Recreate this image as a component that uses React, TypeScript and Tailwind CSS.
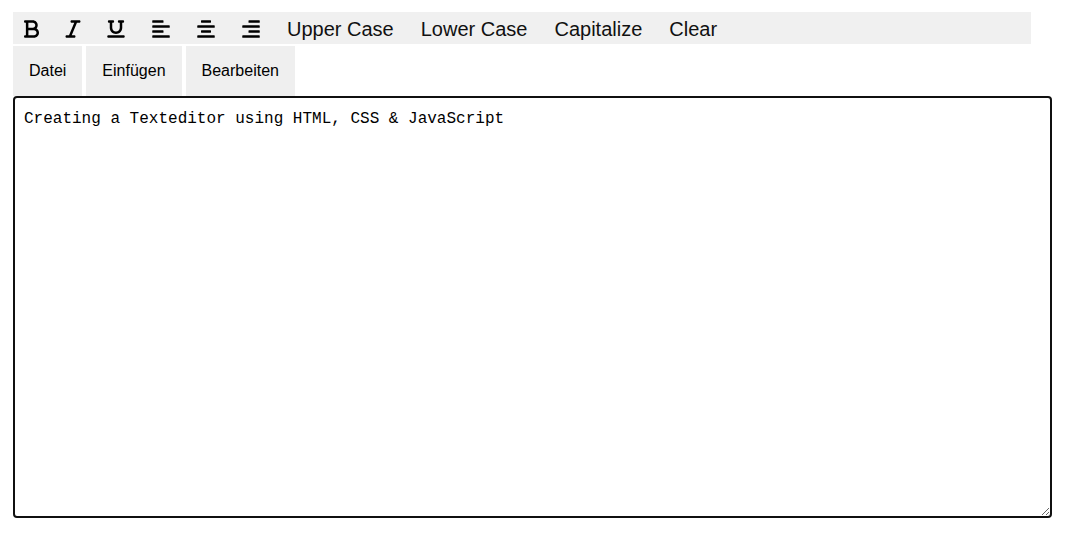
import { useRef, useState } from "react";
import type { ReactNode } from "react";
import { FaAlignCenter, FaAlignLeft, FaAlignRight } from "react-icons/fa";
import { FaBold, FaItalic, FaUnderline } from "react-icons/fa6";

type Align = "left" | "center" | "right";

const alignClass: Record<Align, string> = {
  left: "text-left",
  center: "text-center",
  right: "text-right",
};

function ToolButton({
  label,
  onClick,
  children,
}: {
  label?: string;
  onClick: () => void;
  children: ReactNode;
}) {
  return (
    <button
      type="button"
      aria-label={label}
      onClick={onClick}
      className="flex h-8 shrink-0 items-center pt-px text-xl text-[#111111]"
    >
      {children}
    </button>
  );
}

const menus = ["Datei", "Einfügen", "Bearbeiten"];

export default function App() {
  const [text, setText] = useState("Creating a Texteditor using HTML, CSS & JavaScript");
  const [bold, setBold] = useState(false);
  const [italic, setItalic] = useState(false);
  const [underline, setUnderline] = useState(false);
  const [align, setAlign] = useState<Align>("left");
  const area = useRef<HTMLTextAreaElement>(null);

  const capitalize = () =>
    setText(text.toLowerCase().replace(/(^|\s)\S/g, (c) => c.toUpperCase()));

  const clear = () => {
    setText("");
    area.current?.focus();
  };

  const wideIcon = "h-5 w-[18px] text-black";

  return (
    <main className="flex h-screen flex-col bg-white pt-3 pr-6 pb-[18px] pl-[13px] font-['Liberation_Sans',Arial,sans-serif]">
      <div className="mr-[21px] flex h-8 shrink-0 items-center gap-[27px] bg-[#f0f0f0] pl-[11px]">
        <ToolButton label="Bold" onClick={() => setBold(!bold)}>
          <FaBold className="h-5 w-[15px] text-black" />
        </ToolButton>
        <ToolButton label="Italic" onClick={() => setItalic(!italic)}>
          <FaItalic
            preserveAspectRatio="xMidYMid slice"
            className="h-5 w-[14px] overflow-visible text-black"
          />
        </ToolButton>
        <ToolButton label="Underline" onClick={() => setUnderline(!underline)}>
          <FaUnderline className={wideIcon} />
        </ToolButton>
        <ToolButton label="Align left" onClick={() => setAlign("left")}>
          <FaAlignLeft className={wideIcon} />
        </ToolButton>
        <ToolButton label="Align center" onClick={() => setAlign("center")}>
          <FaAlignCenter className={wideIcon} />
        </ToolButton>
        <ToolButton label="Align right" onClick={() => setAlign("right")}>
          <FaAlignRight className={wideIcon} />
        </ToolButton>
        <ToolButton onClick={() => setText(text.toUpperCase())}>Upper Case</ToolButton>
        <ToolButton onClick={() => setText(text.toLowerCase())}>Lower Case</ToolButton>
        <ToolButton onClick={capitalize}>Capitalize</ToolButton>
        <ToolButton onClick={clear}>Clear</ToolButton>
      </div>

      <nav className="mt-0.5 flex shrink-0 gap-1">
        {menus.map((name) => (
          <button
            key={name}
            type="button"
            className="h-[50px] bg-[#efefef] px-4 text-base text-black"
          >
            {name}
          </button>
        ))}
      </nav>

      <textarea
        ref={area}
        aria-label="Text"
        spellCheck={false}
        value={text}
        onChange={(e) => setText(e.target.value)}
        className={`min-h-0 w-full flex-1 resize rounded border-2 border-[#101010] bg-white p-[9px] font-['Consolas','Liberation_Mono',monospace] text-base leading-6 text-black outline-none ${alignClass[align]} ${bold ? "font-bold" : ""} ${italic ? "italic" : ""} ${underline ? "underline" : ""}`}
      />
    </main>
  );
}
